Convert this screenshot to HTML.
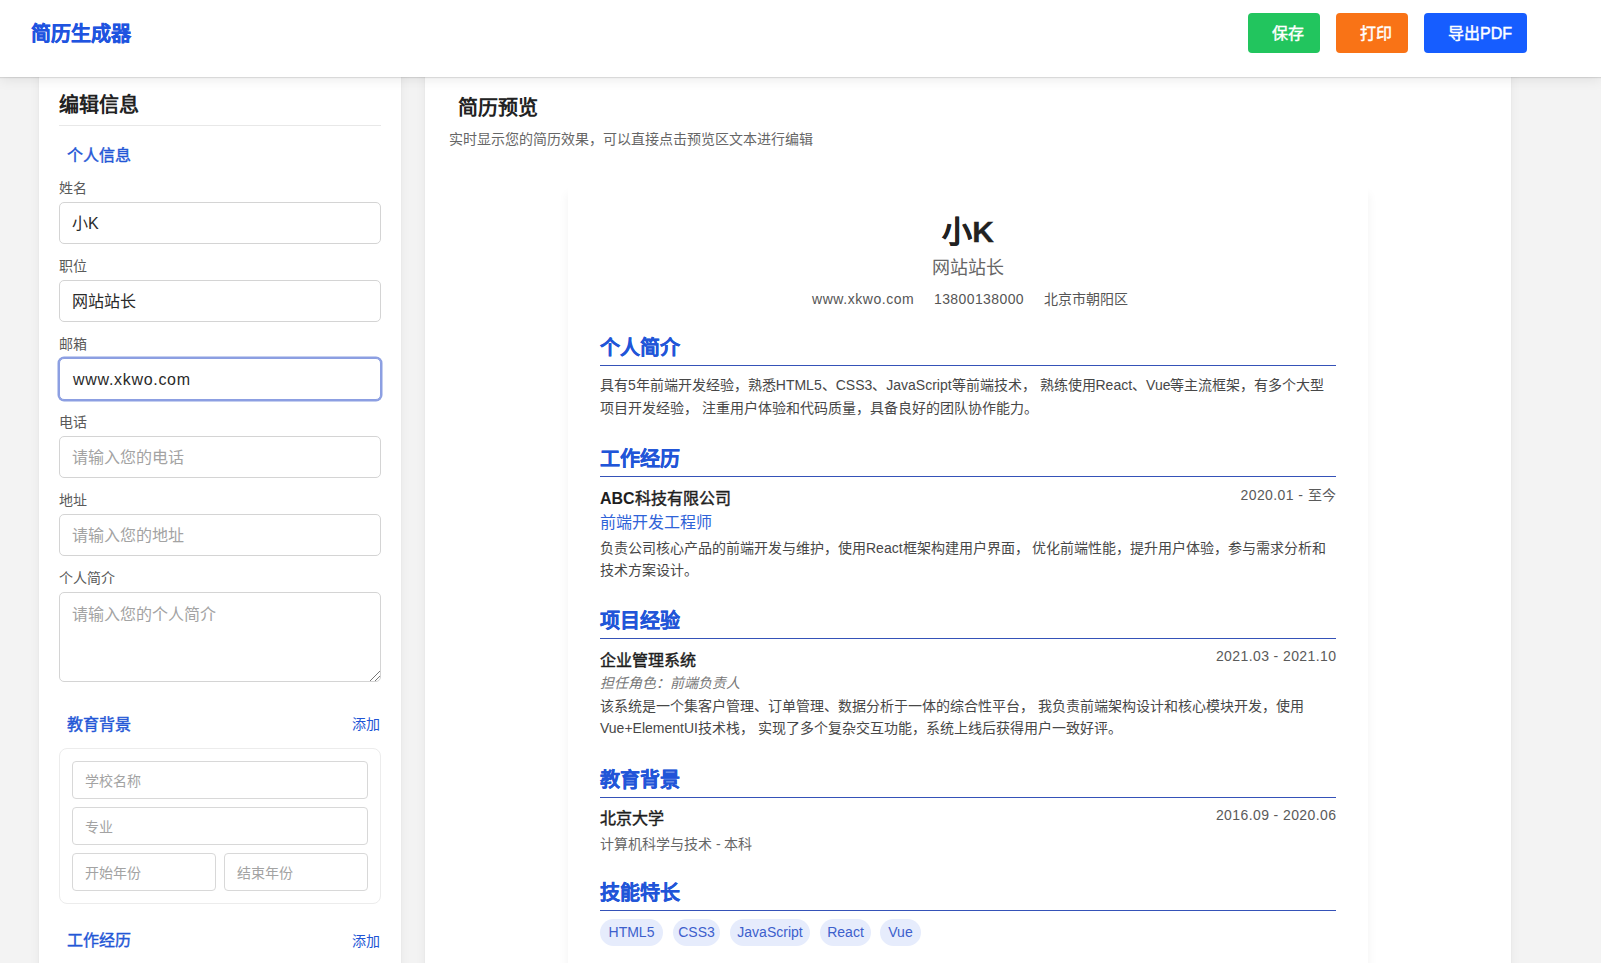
<!DOCTYPE html>
<html lang="zh-CN">
<head>
<meta charset="utf-8">
<title>简历生成器</title>
<style>
*{box-sizing:border-box;margin:0;padding:0}
html,body{width:1601px;height:963px;overflow:hidden}
body{background:#f3f3f3;font-family:"Liberation Sans",sans-serif;color:#333;position:relative}
.a{position:absolute;white-space:nowrap}
.hdr{position:absolute;left:0;top:0;width:1601px;height:77px;background:#fff;box-shadow:0 1px 1px rgba(0,0,0,.10),0 3px 12px rgba(0,0,0,.08);z-index:5}
.logo{left:31px;top:20px;line-height:28px;font-size:20px;font-weight:bold;color:#1f54e0;-webkit-text-stroke:0.35px #1f54e0}
.btn{position:absolute;top:13px;height:40px;border-radius:4px;color:#fff;font-size:16px;font-weight:normal;-webkit-text-stroke:0.45px #fff;line-height:42px;padding-left:24px;white-space:nowrap}
.panel{position:absolute;background:#fff;box-shadow:0 0 1px rgba(0,0,0,.08),0 0 10px rgba(0,0,0,.06)}
.lbl{font-size:14px;color:#5a5a5a;line-height:20px;left:59px}
.inp{position:absolute;left:59px;width:322px;height:42px;border:1px solid #d4d4d4;border-radius:5px;background:#fff;font-size:16px;line-height:42px;padding-left:12px;color:#2a2a2a;white-space:nowrap}
.ph{color:#a3a3a3}
.sh{font-size:16px;font-weight:normal;color:#2457d6;-webkit-text-stroke:0.4px #2457d6;line-height:24px}
.add{font-size:14px;color:#2155d5;line-height:20px}
.sinp{position:absolute;height:38px;border:1px solid #d8d8d8;border-radius:4px;font-size:14px;line-height:38px;padding-left:12px;color:#a3a3a3;white-space:nowrap;background:#fff}
.paper{position:absolute;left:568px;top:184px;width:800px;height:900px;background:#fff;box-shadow:0 10px 10px rgba(0,0,0,.06)}
.h2{left:600px;font-size:20px;font-weight:bold;color:#2155d8;-webkit-text-stroke:0.25px #2155d8;line-height:28px}
.rule{position:absolute;left:600px;width:736px;height:1px;background:#3552b8}
.p{left:600px;font-size:14px;color:#474747;line-height:22px}
.b16{left:600px;font-size:16px;font-weight:normal;color:#1e1e1e;-webkit-text-stroke:0.45px #1e1e1e;line-height:22px}
.date{right:265px;font-size:14px;color:#5a5a5a;line-height:20px;letter-spacing:0.4px;margin-right:-0.4px}
.tag{position:absolute;top:919px;height:27px;border-radius:13.5px;background:#e6ecfc;color:#3d60cc;font-size:14px;line-height:27px;text-align:center;white-space:nowrap}
</style>
</head>
<body>
<div class="hdr">
  <div class="a logo">简历生成器</div>
  <div class="btn" style="left:1248px;width:72px;background:#22c55e">保存</div>
  <div class="btn" style="left:1336px;width:72px;background:#f97316">打印</div>
  <div class="btn" style="left:1424px;width:103px;background:#165dff">导出PDF</div>
</div>

<!-- left panel -->
<div class="panel" style="left:39px;top:60px;width:362px;height:920px"></div>
<div class="a" style="left:59px;top:91px;line-height:28px;font-size:20px;font-weight:bold;color:#222">编辑信息</div>
<div class="a" style="left:59px;top:125px;width:322px;height:1px;background:#e8e8e8"></div>
<div class="a sh" style="left:67px;top:144px">个人信息</div>

<div class="a lbl" style="top:178px">姓名</div>
<div class="inp" style="top:202px">小K</div>
<div class="a lbl" style="top:256px">职位</div>
<div class="inp" style="top:280px">网站站长</div>
<div class="a lbl" style="top:334px">邮箱</div>
<div class="inp" style="top:358px;border-color:#8c9fe2;box-shadow:0 0 0 1.5px #8c9fe2;letter-spacing:0.7px;padding-left:13px">www.xkwo.com</div>
<div class="a lbl" style="top:412px">电话</div>
<div class="inp ph" style="top:436px">请输入您的电话</div>
<div class="a lbl" style="top:490px">地址</div>
<div class="inp ph" style="top:514px">请输入您的地址</div>
<div class="a lbl" style="top:568px">个人简介</div>
<div class="inp ph" style="top:592px;height:90px;line-height:24px;padding-top:10px">请输入您的个人简介</div>
<svg class="a" style="left:368px;top:669px" width="13" height="13" viewBox="0 0 13 13"><path d="M2 12L12 2M7 12L12 7" stroke="#777" stroke-width="1"/></svg>

<div class="a sh" style="left:67px;top:713px">教育背景</div>
<div class="a add" style="left:352px;top:714px">添加</div>
<div class="a" style="left:59px;top:748px;width:322px;height:156px;border:1px solid #ececec;border-radius:8px"></div>
<div class="sinp" style="left:72px;top:761px;width:296px">学校名称</div>
<div class="sinp" style="left:72px;top:807px;width:296px">专业</div>
<div class="sinp" style="left:72px;top:853px;width:144px">开始年份</div>
<div class="sinp" style="left:224px;top:853px;width:144px">结束年份</div>

<div class="a sh" style="left:67px;top:929px">工作经历</div>
<div class="a add" style="left:352px;top:931px">添加</div>

<!-- right panel -->
<div class="panel" style="left:425px;top:60px;width:1086px;height:920px"></div>
<div class="a" style="left:458px;top:94px;line-height:28px;font-size:20px;font-weight:bold;color:#222">简历预览</div>
<div class="a" style="left:449px;top:129px;line-height:20px;font-size:14px;color:#666">实时显示您的简历效果，可以直接点击预览区文本进行编辑</div>

<div class="paper"></div>
<div class="a" style="left:568px;width:800px;text-align:center;top:212px;line-height:40px;font-size:30px;font-weight:bold;color:#222;-webkit-text-stroke:0.3px #222">小K</div>
<div class="a" style="left:568px;width:800px;text-align:center;top:255px;line-height:26px;font-size:18px;color:#666">网站站长</div>
<div class="a" style="left:812px;top:289px;line-height:20px;font-size:14px;color:#555;letter-spacing:0.55px">www.xkwo.com</div>
<div class="a" style="left:934px;top:289px;line-height:20px;font-size:14px;color:#555;letter-spacing:0.4px">13800138000</div>
<div class="a" style="left:1044px;top:289px;line-height:20px;font-size:14px;color:#555">北京市朝阳区</div>

<div class="a h2" style="top:334px">个人简介</div>
<div class="rule" style="top:365px"></div>
<div class="a p" style="top:374px">具有5年前端开发经验，熟悉HTML5、CSS3、JavaScript等前端技术， 熟练使用React、Vue等主流框架，有多个大型</div>
<div class="a p" style="top:397px">项目开发经验， 注重用户体验和代码质量，具备良好的团队协作能力。</div>

<div class="a h2" style="top:445px">工作经历</div>
<div class="rule" style="top:476px"></div>
<div class="a b16" style="top:488px"><b style="-webkit-text-stroke:0">ABC</b>科技有限公司</div>
<div class="a date" style="top:485px">2020.01 - 至今</div>
<div class="a" style="left:600px;top:512px;line-height:22px;font-size:16px;color:#2f63d8">前端开发工程师</div>
<div class="a p" style="top:537px">负责公司核心产品的前端开发与维护，使用React框架构建用户界面， 优化前端性能，提升用户体验，参与需求分析和</div>
<div class="a p" style="top:559px">技术方案设计。</div>

<div class="a h2" style="top:607px">项目经验</div>
<div class="rule" style="top:638px"></div>
<div class="a b16" style="top:650px">企业管理系统</div>
<div class="a date" style="top:646px">2021.03 - 2021.10</div>
<div class="a" style="left:600px;top:673px;line-height:20px;font-size:14px;font-style:italic;color:#777">担任角色：前端负责人</div>
<div class="a p" style="top:695px">该系统是一个集客户管理、订单管理、数据分析于一体的综合性平台， 我负责前端架构设计和核心模块开发，使用</div>
<div class="a p" style="top:717px">Vue+ElementUI技术栈， 实现了多个复杂交互功能，系统上线后获得用户一致好评。</div>

<div class="a h2" style="top:766px">教育背景</div>
<div class="rule" style="top:797px"></div>
<div class="a b16" style="top:808px">北京大学</div>
<div class="a date" style="top:805px">2016.09 - 2020.06</div>
<div class="a" style="left:600px;top:834px;line-height:20px;font-size:14px;color:#666">计算机科学与技术 - 本科</div>

<div class="a h2" style="top:879px">技能特长</div>
<div class="rule" style="top:910px"></div>
<div class="tag" style="left:600px;width:63px">HTML5</div>
<div class="tag" style="left:673px;width:47px">CSS3</div>
<div class="tag" style="left:730px;width:80px">JavaScript</div>
<div class="tag" style="left:820px;width:51px">React</div>
<div class="tag" style="left:880px;width:41px">Vue</div>
</body>
</html>
